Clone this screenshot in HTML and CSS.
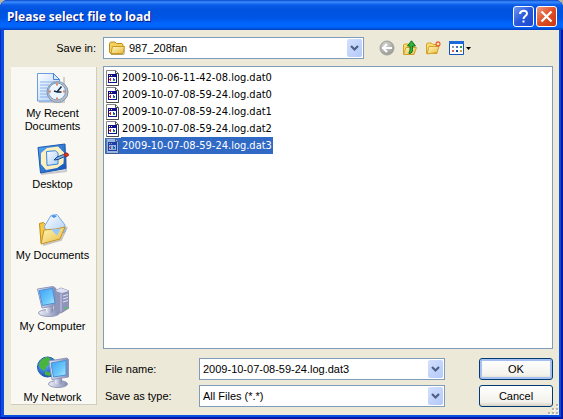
FILE: index.html
```html
<!DOCTYPE html>
<html lang="en">
<head>
<meta charset="utf-8">
<title>Please select file to load</title>
<link rel="stylesheet" href="styles.css">
</head>
<body>
<svg class="defs" aria-hidden="true">
  <defs>
    <linearGradient id="folder" x1="0" y1="0" x2="1" y2="1"><stop offset="0" stop-color="#fff8c0"/><stop offset="1" stop-color="#e9b93e"/></linearGradient>
    <linearGradient id="screen" x1="0" y1="0" x2="1" y2="1"><stop offset="0" stop-color="#3aa0f4"/><stop offset=".6" stop-color="#6cc8fb"/><stop offset="1" stop-color="#b4ecff"/></linearGradient>
    <linearGradient id="paper" x1="0" y1="0" x2="1" y2="1"><stop offset="0" stop-color="#ffffff"/><stop offset="1" stop-color="#aacdf8"/></linearGradient>
    <linearGradient id="metal" x1="0" y1="0" x2="1" y2="0"><stop offset="0" stop-color="#eef0fa"/><stop offset="1" stop-color="#8088ae"/></linearGradient>
    <linearGradient id="blue" x1="0" y1="0" x2="1" y2="1"><stop offset="0" stop-color="#58a8f4"/><stop offset="1" stop-color="#0f4fb4"/></linearGradient>
    <radialGradient id="globe" cx=".35" cy=".35" r=".75"><stop offset="0" stop-color="#69b8ff"/><stop offset="1" stop-color="#0b3fae"/></radialGradient>
    <radialGradient id="grey" cx=".4" cy=".3" r=".8"><stop offset="0" stop-color="#d4d4d0"/><stop offset="1" stop-color="#92928e"/></radialGradient>
    <symbol id="chevron" viewBox="0 0 15 18"><path d="M4 7l3.500 3.500L11 7" fill="none" stroke="#4d6185" stroke-width="2.200"/></symbol>
    <symbol id="log" viewBox="0 0 16 16">
      <path d="M1.500.5h9l3 3v12h-12z" fill="#fff" stroke="#858585"/>
      <path d="M10.500.5v3h3M13.500 4v11.500h-12" fill="none" stroke="#4c4c4c"/>
      <rect x="3" y="4" width="9" height="9" fill="#10108c"/>
      <rect x="4" y="7" width="7" height="5" fill="#fff"/>
      <path d="M4 5h1v1H4zM6 5h1v1H6z" fill="#ffe34a"/>
      <path d="M5 8h1v1H5zM4 9h2v1H4zM5 10h1v1H5z" fill="#d02020"/>
      <path d="M8 8h1v1H8zM8 9h2v1H8z" fill="#2046d0"/>
      <path d="M8 10h2v1H8z" fill="#209c40"/>
    </symbol>
  </defs>
</svg>
<main class="dialog">
  <header class="titlebar">
    <h1>Please select file to load</h1>
    <button class="caption help" type="button" aria-label="Help"><svg viewBox="0 0 19 19"><path d="M6 7c0-4 7-4.500 7-.5 0 2.500-3.500 2.500-3.500 5.500M9.500 13.500v2" fill="none" stroke="#fff" stroke-width="2"/></svg></button>
    <button class="caption close" type="button" aria-label="Close"><svg viewBox="0 0 19 19"><path d="M4.500 4.500l10 10M14.500 4.500l-10 10" stroke="#fff" stroke-width="2.300"/></svg></button>
  </header>
  <form class="content">
    <div class="lookup">
      <label for="folder-select">Save in:</label>
      <div class="combo">
        <svg class="folder" viewBox="0 0 16 16"><path d="M2 14.500h13l1-8" fill="none" stroke="#b9b49c"/><path d="M.5 12V3.500l1-1.500h4.500l1.500 1.500H13l1 1.500v8L12.500 14H2z" fill="#f3cf60" stroke="#bf8d18"/><path d="M3.500 6.500h12l-1.500 7H2z" fill="url(#folder)" stroke="#c99a20"/></svg>
        <select id="folder-select"><option>987_208fan</option></select>
        <span class="drop"><svg><use href="#chevron"/></svg></span>
      </div>
      <div class="tools">
        <button type="button" aria-label="Back"><svg viewBox="0 0 16 16"><circle cx="8" cy="8" r="7" fill="url(#grey)" stroke="#a3a39d"/><path d="M8 4L4 8l4 4M4.500 8H13" fill="none" stroke="#fff" stroke-width="2"/></svg></button>
        <button type="button" aria-label="Up one level"><svg viewBox="0 0 16 16"><path d="M1.500 14V5l1-1h4l1 1.500h4V14z" fill="#f8dc72" stroke="#d3a32b"/><path d="M4 7.500h10.500l-2.500 7H1.500z" fill="url(#folder)" stroke="#cfa02c"/><path d="M7 13.500c3 0 3.500-2 3.500-4V6h3L9.500.8 5.500 6h2.500v3.500c0 1.500-1 2-1 4z" fill="#33b33c" stroke="#12731c"/></svg></button>
        <button type="button" aria-label="Create new folder"><svg viewBox="0 0 16 16"><path d="M1.500 13.500V4l1-1h4L8 4.500h4v9z" fill="#f8dc72" stroke="#d3a32b"/><path d="M4 6.500h10l-2 6-10 1.500z" fill="url(#folder)" stroke="#d3a32b"/><path d="M13 1v6M10 4h6M11 2l4 4M15 2l-4 4" stroke="#e8582b" stroke-width="1.200"/><circle cx="13" cy="4" r="1.300" fill="#ffe9a0"/></svg></button>
        <button class="views" type="button" aria-label="View menu"><svg viewBox="0 0 16 16"><path d="M1.500 1.500h14v13h-14z" fill="#fff" stroke="#1454b8"/><path d="M1 1h15v3H1z" fill="#1b68d8"/><path d="M4 6h2v2H4z" fill="#8f98b5"/><path d="M8 6h2v2H8z" fill="#5a6eb8"/><path d="M12 6h2v2h-2z" fill="#2d9e45"/><path d="M4 10h2v2H4z" fill="#e26450"/><path d="M8 10h2v2H8z" fill="#1646a0"/><path d="M12 10h2v2h-2z" fill="#d2a42a"/></svg><svg class="caret" viewBox="0 0 5 3"><path d="M0 0h5L2.500 3z"/></svg></button>
      </div>
    </div>
    <div class="browser">
      <nav class="places" aria-label="Places">
        <button type="button"><svg viewBox="0 0 32 32"><path d="M2 30h25V5" fill="none" stroke="#d0d0d2" stroke-width="2"/><path d="M.5 1.500h16l6 6V29H.5z" fill="url(#paper)" stroke="#6a9ce0"/><path d="M16.500 1.500v6h6z" fill="#d7e8ff" stroke="#4884d4"/><path d="M3 10h15M3 13h9M3 16h7M3 19h7M3 22h8M3 25h10" stroke="#86b2ec"/><circle cx="20.500" cy="20" r="10.500" fill="#b8bfca" stroke="#8593a6"/><circle cx="20" cy="19.500" r="8.500" fill="#eaf5ff" stroke="#799bc4"/><path d="M20 11.500v2M20 25.500v2M12 19.500h2M26 19.500h2" stroke="#ee8244" stroke-width="2"/><path d="M24.500 14.500L20 20l-3-1M20 20h4.500" fill="none" stroke="#16263e" stroke-width="1.500"/></svg><span>My Recent Documents</span></button>
        <button type="button"><svg viewBox="0 0 32 32"><path d="M4 31l25-3V9" fill="none" stroke="#c8c8cd" stroke-width="2"/><path d="M1 4.500L28 1l1 24.500L3.500 30z" fill="url(#blue)" stroke="#1b58b4"/><path d="M10 5l11-1.500 6 6-.5 11L20 25 9 27l-5-6V10z" fill="#fff1bd"/><path d="M9.500 8.500l9-.8 2.500 2.500V21l-11 1.500z" fill="url(#paper)" stroke="#3885de"/><path d="M17 17l3-3 8-3 1 2-8 3.500z" fill="#8ab4e6" stroke="#16478f"/><path d="M27 11l2-1 2 .5.500 2-3 1.500z" fill="#d73524" stroke="#a8281e"/></svg><span>Desktop</span></button>
        <button type="button"><svg viewBox="0 0 32 32"><path d="M6 31l18-5 6-13" fill="none" stroke="#c7c5bd" stroke-width="2"/><path d="M2.500 9.500l4-1 2 2 5-1L15 24 4 29z" fill="#f5c944" stroke="#be8e1c"/><path d="M7 13L14 1.500l6-1L28 11v7L13 21z" fill="url(#paper)" stroke="#77a9e7"/><path d="M14 2l3 2 3-2-3-1z" fill="#428ff0"/><path d="M7 16l12-1 9-2-5 12L4 30z" fill="url(#folder)" stroke="#c2921e"/><path d="M14 15.500l6 6 4-7z" fill="#98caf9"/></svg><span>My Documents</span></button>
        <button type="button"><svg viewBox="0 0 32 32"><path d="M18 6l6-3 8 3v17l-8 5-7-3z" fill="#8f94ba" stroke="#8a8fac"/><path d="M18 6l6-3 8 3-7 2z" fill="#dfe2f2"/><path d="M24 8.500v18" stroke="#c8cce4"/><path d="M26 11l5-1.500M26 14l5-1.500M26 17l5-1.500" stroke="#e2e5f2"/><path d="M29 22v2" stroke="#3bd34b" stroke-width="2"/><ellipse cx="12" cy="28" rx="10.500" ry="3.500" fill="url(#metal)" stroke="#9299ba"/><path d="M9 21h7v6c-2 2-5 2-7 0z" fill="url(#metal)"/><path d="M.5 4L16 1.500l3 2v17L5 23z" fill="url(#metal)" stroke="#8f97bf"/><path d="M2 5.500l13.500-2L18 18 5.500 20.500z" fill="url(#screen)" stroke="#4a90d8"/></svg><span>My Computer</span></button>
        <button type="button"><svg viewBox="0 0 32 32"><circle cx="10.500" cy="11" r="10" fill="url(#globe)" stroke="#1c56b4"/><path d="M4 4l5-3 5 1-2 3 2 2-4 3-3 5-4-3-1-4zM8 15l6 2-1 3-5-1zM15 3l4 3-3 1z" fill="#48b43d"/><ellipse cx="21" cy="28" rx="9.500" ry="3.500" fill="url(#metal)" stroke="#9299ba"/><path d="M18 21h7v6c-2 2-5 2-7 0z" fill="url(#metal)"/><path d="M12 5l18-3 1.500 1.500V21L15 23.500z" fill="url(#metal)" stroke="#8f97bf"/><path d="M14 7l15-2.500V19L16.500 21z" fill="url(#screen)" stroke="#4a90d8"/></svg><span>My Network</span></button>
      </nav>
      <div class="pane">
        <ul class="files" role="listbox" aria-label="Files">
          <li role="option"><svg><use href="#log"/></svg><span>2009-10-06-11-42-08.log.dat0</span></li>
          <li role="option"><svg><use href="#log"/></svg><span>2009-10-07-08-59-24.log.dat0</span></li>
          <li role="option"><svg><use href="#log"/></svg><span>2009-10-07-08-59-24.log.dat1</span></li>
          <li role="option"><svg><use href="#log"/></svg><span>2009-10-07-08-59-24.log.dat2</span></li>
          <li class="selected" role="option" aria-selected="true"><i><svg><use href="#log"/></svg></i><span>2009-10-07-08-59-24.log.dat3</span></li>
        </ul>
        <div class="save">
          <label for="name">File name:</label>
          <div class="combo"><input id="name" type="text" value="2009-10-07-08-59-24.log.dat3"><button class="drop" type="button" aria-label="Recent file names"><svg><use href="#chevron"/></svg></button></div>
          <button class="push primary" type="submit">OK</button>
          <label for="type">Save as type:</label>
          <div class="combo"><select id="type"><option>All Files (*.*)</option></select><span class="drop"><svg><use href="#chevron"/></svg></span></div>
          <button class="push" type="button">Cancel</button>
        </div>
      </div>
    </div>
    <svg class="grip" viewBox="0 0 12 12" aria-hidden="true"><path d="M10 2h2v2h-2zM6 6h2v2H6zM10 6h2v2h-2zM2 10h2v2H2zM6 10h2v2H6zM10 10h2v2h-2z" fill="#fff"/><path d="M9 1h2v2H9zM5 5h2v2H5zM9 5h2v2H9zM1 9h2v2H1zM5 9h2v2H5zM9 9h2v2H9z" fill="#b8b4a2"/></svg>
  </form>
</main>
</body>
</html>
```
FILE: styles.css
```css
* { box-sizing: border-box; }
body {
  margin: 0;
  background: #b9b5a6;
  color: #000;
  font: 11px/13px "Liberation Sans", sans-serif;
}
.defs { position: absolute; width: 0; height: 0; }
svg { display: block; }
button, input, select { font: inherit; color: inherit; }
button { padding: 0; border: 0; background: none; }

.dialog {
  display: flex;
  flex-direction: column;
  min-height: 100vh;
  padding: 0 4px 4px;
  border-radius: 8px 8px 0 0;
  background: #0a4fe0;
  box-shadow: inset 1px 0 #0826cc, inset -2px 0 #0018a8, inset 0 -2px #0018a8;
  overflow: hidden;
}
.titlebar {
  display: flex;
  align-items: center;
  gap: 2px;
  height: 30px;
  margin: 0 -4px;
  padding: 3px 6px 0 7px;
  background: linear-gradient(#0a47c6 0, #3b8cff 2px, #0a5ce8 5px, #0053df 10px, #0055e5 18px, #0066ff 24px, #0064fa 27px, #0040c0 30px);
}
.titlebar h1 {
  flex: 1;
  margin: 0;
  color: #fff;
  font: bold 12px/16px "Noto Sans", sans-serif;
  text-shadow: 1px 1px #0a1883;
}
.caption {
  width: 21px;
  height: 21px;
  border: 1px solid #fff;
  border-radius: 3px;
}
.help { background: linear-gradient(135deg, #7097f0, #2858dc 50%, #1d48cc); }
.close { background: linear-gradient(135deg, #f09a80, #e04e25 50%, #c83810); }

.content {
  position: relative;
  display: flex;
  flex: 1;
  flex-direction: column;
  gap: 7px;
  padding: 7px 6px 8px 7px;
  background: #ece9d8;
}
.lookup { display: flex; align-items: center; }
.lookup label { width: 85px; margin-right: 7px; text-align: right; }
.lookup .combo { flex: 1; }
.combo {
  display: flex;
  align-items: center;
  min-width: 0;
  height: 22px;
  padding: 1px;
  border: 1px solid #7f9db9;
  background: #fff;
}
.combo select, .combo input {
  flex: 1;
  min-width: 0;
  height: 18px;
  margin: 0;
  padding: 0 2px;
  border: 0;
  outline: 0;
  background: transparent;
  appearance: none;
}
.folder { width: 16px; height: 16px; margin: 0 2px 0 4px; }
.drop {
  flex: none;
  width: 15px;
  height: 18px;
  border-radius: 2px;
  background: linear-gradient(135deg, #d3e0ff, #b3c9f8);
  pointer-events: none;
}
.drop svg { width: 15px; height: 18px; }
.tools { display: flex; gap: 7px; width: 174px; margin-left: 15px; }
.tools svg { width: 16px; height: 16px; }
.views { display: flex; align-items: center; gap: 2px; }
.tools .caret { width: 5px; height: 3px; }

.browser { display: flex; flex: 1; gap: 6px; }
.places {
  display: flex;
  flex: none;
  flex-direction: column;
  align-self: flex-start;
  gap: 10px;
  width: 86px;
  margin-top: 1px;
  padding: 5px 2px 0 0;
  border-right: 1px solid #d0cdbf;
  border-bottom: 1px solid #d0cdbf;
  background: #f9f8f3;
}
.places button {
  display: flex;
  flex-direction: column;
  align-items: center;
  gap: 3px;
  min-height: 61px;
}
.places button:last-child { min-height: 0; }
.places svg { width: 32px; height: 32px; }
.places span { padding: 0 8px; }
.places button:nth-child(n+2) span { padding: 0; }

.pane { display: flex; flex: 1; flex-direction: column; gap: 9px; min-width: 0; }
.files {
  flex: 1;
  margin: 0;
  padding: 2px 1px;
  border: 1px solid #7f9db9;
  background: #fff;
  list-style: none;
  font-family: "DejaVu Sans Condensed", "Liberation Sans", sans-serif;
}
.files li { display: flex; align-items: center; height: 17px; }
.files svg { width: 16px; height: 16px; }
.files span { padding: 2px 1px; }
.selected i { background: #316ac5; }
.selected svg { opacity: .5; }
.selected span { background: #316ac5; color: #fff; }

.save {
  display: grid;
  grid-template-columns: 94px 1fr 74px;
  align-items: center;
  gap: 5px 0;
}
.save label { padding-left: 2px; }
.save .combo { margin: 0 34px 0 2px; }
.push {
  height: 22px;
  border: 1px solid #003c74;
  border-radius: 3px;
  background: linear-gradient(#fff, #f3f2ec 80%, #d8d2c4);
}
.primary { box-shadow: inset 0 0 0 2px #a4bff0; }
.grip { position: absolute; right: 0; bottom: 0; width: 12px; height: 12px; }
```
